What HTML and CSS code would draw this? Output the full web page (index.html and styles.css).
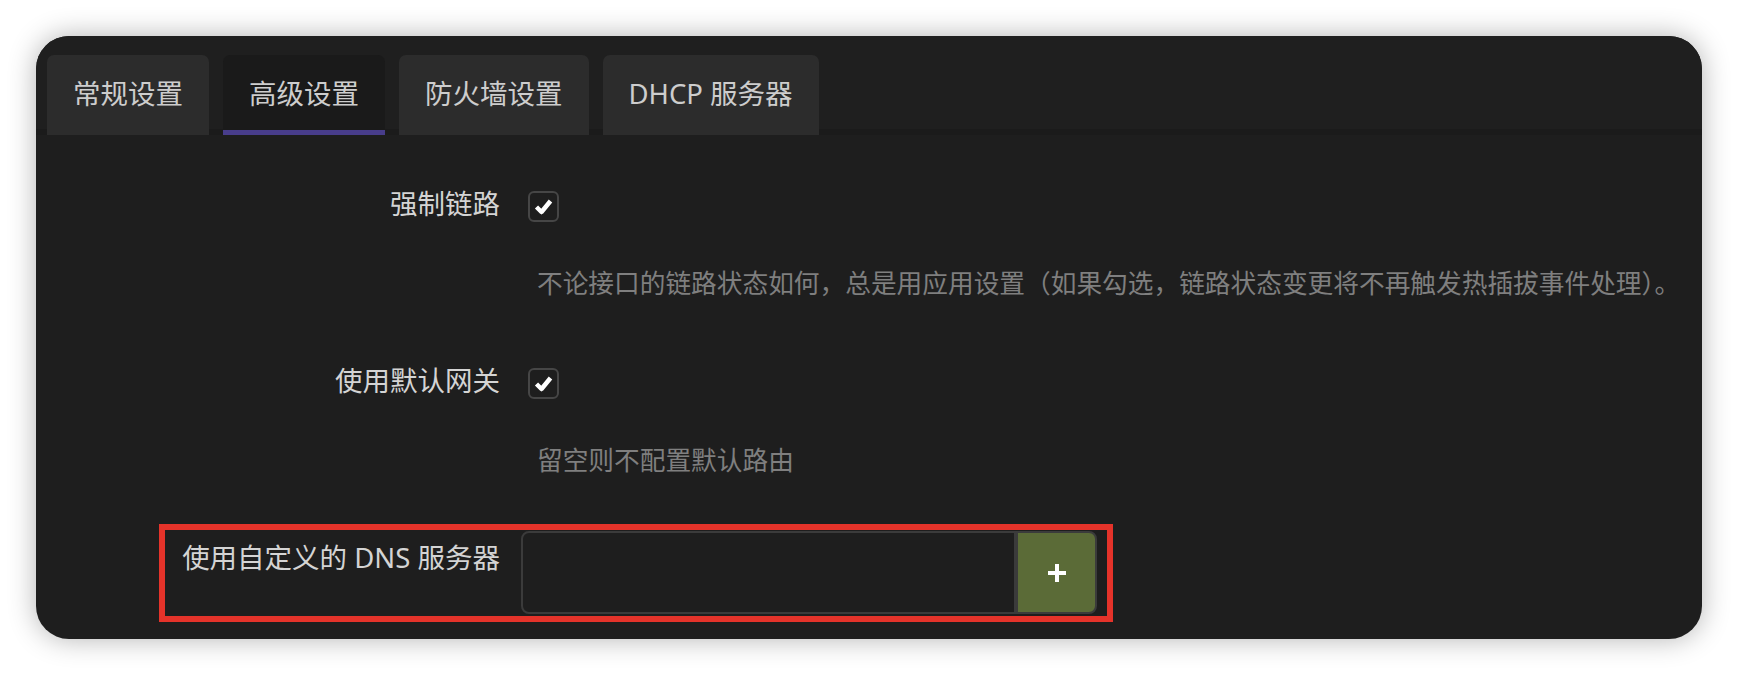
FILE: index.html
```html
<!DOCTYPE html>
<html lang="zh-CN">
<head>
  <meta charset="UTF-8">
  <meta name="viewport" content="width=device-width, initial-scale=1.0">
  <title>接口设置</title>
  <link rel="stylesheet" href="styles.css">
</head>
<body>

  <div class="window">
    <div class="tab-bar">
      <div class="tab">常规设置</div>
      <div class="tab active">高级设置</div>
      <div class="tab">防火墙设置</div>
      <div class="tab">DHCP 服务器</div>
    </div>

    <div class="form">
      <div class="row">
        <div class="row-label">强制链路</div>
        <div class="row-field">
          <span class="check">
            <svg width="19" height="17" viewBox="0 0 19 17"><path d="M2.5 9 L7.5 14 L16.5 3" fill="none" stroke="#fff" stroke-width="4.5" stroke-linejoin="round"/></svg>
          </span>
          <div class="desc">不论接口的链路状态如何，总是用应用设置（如果勾选，链路状态变更将不再触发热插拔事件处理）。</div>
        </div>
      </div>

      <div class="row">
        <div class="row-label">使用默认网关</div>
        <div class="row-field">
          <span class="check">
            <svg width="19" height="17" viewBox="0 0 19 17"><path d="M2.5 9 L7.5 14 L16.5 3" fill="none" stroke="#fff" stroke-width="4.5" stroke-linejoin="round"/></svg>
          </span>
          <div class="desc">留空则不配置默认路由</div>
        </div>
      </div>

      <!-- highlighted row -->
      <div class="highlight">
        <div class="row-label">使用自定义的 DNS 服务器</div>
        <div class="input-group">
          <div class="dns-input"></div>
          <div class="add-btn">
            <svg width="18" height="18" viewBox="0 0 18 18"><path d="M9 0 V18 M0 9 H18" stroke="#fff" stroke-width="4"/></svg>
          </div>
        </div>
      </div>
    </div>
  </div>

</body>
</html>
```

FILE: styles.css
```css
body {
  margin: 0;
  padding: 36px;
  background-color: #fff;
  font-family: 'Noto Sans', 'Noto Sans CJK SC', sans-serif;
}
.window {
  height: 603px;
  background-color: #1e1e1e;
  border-radius: 33px;
  overflow: hidden;
  box-shadow: 0 0 28px rgba(0, 0, 0, 0.3);
}
.tab-bar {
  display: flex;
  gap: 14px;
  padding: 19px 0 0 11px;
  background: linear-gradient(#1f1f1f calc(100% - 6px), #1b1b1b 0);
}
.tab {
  display: flex;
  align-items: center;
  height: 80px;
  box-sizing: border-box;
  padding: 0 26px 6px;
  font-size: 27.5px;
  color: #cdcdcd;
  background-color: #2c2c2c;
  border-radius: 7px 7px 0 0;
}
.tab.active {
  background-color: #1a1a1a;
  box-shadow: inset 0 -5px 0 #483d8b;
}
.form {
  padding-top: 55px;
}
.row {
  display: flex;
  align-items: flex-start;
}
.row + .row {
  margin-top: 65px;
}
.row-label {
  width: 464px;
  margin-right: 21px;
  text-align: right;
  font-size: 27.5px;
  line-height: 28px;
  color: #d4d4d4;
  white-space: nowrap;
}
.row-field {
  display: flex;
  flex-direction: column;
  align-items: flex-start;
}
.check {
  display: flex;
  align-items: center;
  justify-content: center;
  width: 31px;
  height: 31px;
  box-sizing: border-box;
  margin: 1px 0 0 7px;
  border: 2px solid #464646;
  border-radius: 6px;
}
.desc {
  margin: 44px 0 0 16px;
  font-size: 25.7px;
  line-height: 36px;
  color: #7f7f7f;
  white-space: nowrap;
}
.highlight {
  display: flex;
  align-items: flex-start;
  width: 942px;
  height: 86px;
  margin: 45px 0 0 123px;
  border: 6px solid #e5332a;
}
.highlight .row-label {
  width: 335px;
  padding-top: 14px;
}
.input-group {
  display: flex;
  width: 576px;
  height: 83px;
  margin: 1px 10px 0 0;
}
.dns-input {
  flex: 1;
  border: 2px solid #3b3b3b;
  border-radius: 8px 0 0 8px;
  background-color: #1e1e1e;
}
.add-btn {
  display: flex;
  align-items: center;
  justify-content: center;
  width: 81px;
  box-sizing: border-box;
  border: 2px solid #3b3b3b;
  border-radius: 0 8px 8px 0;
  background-color: #5b6b37;
}
```
